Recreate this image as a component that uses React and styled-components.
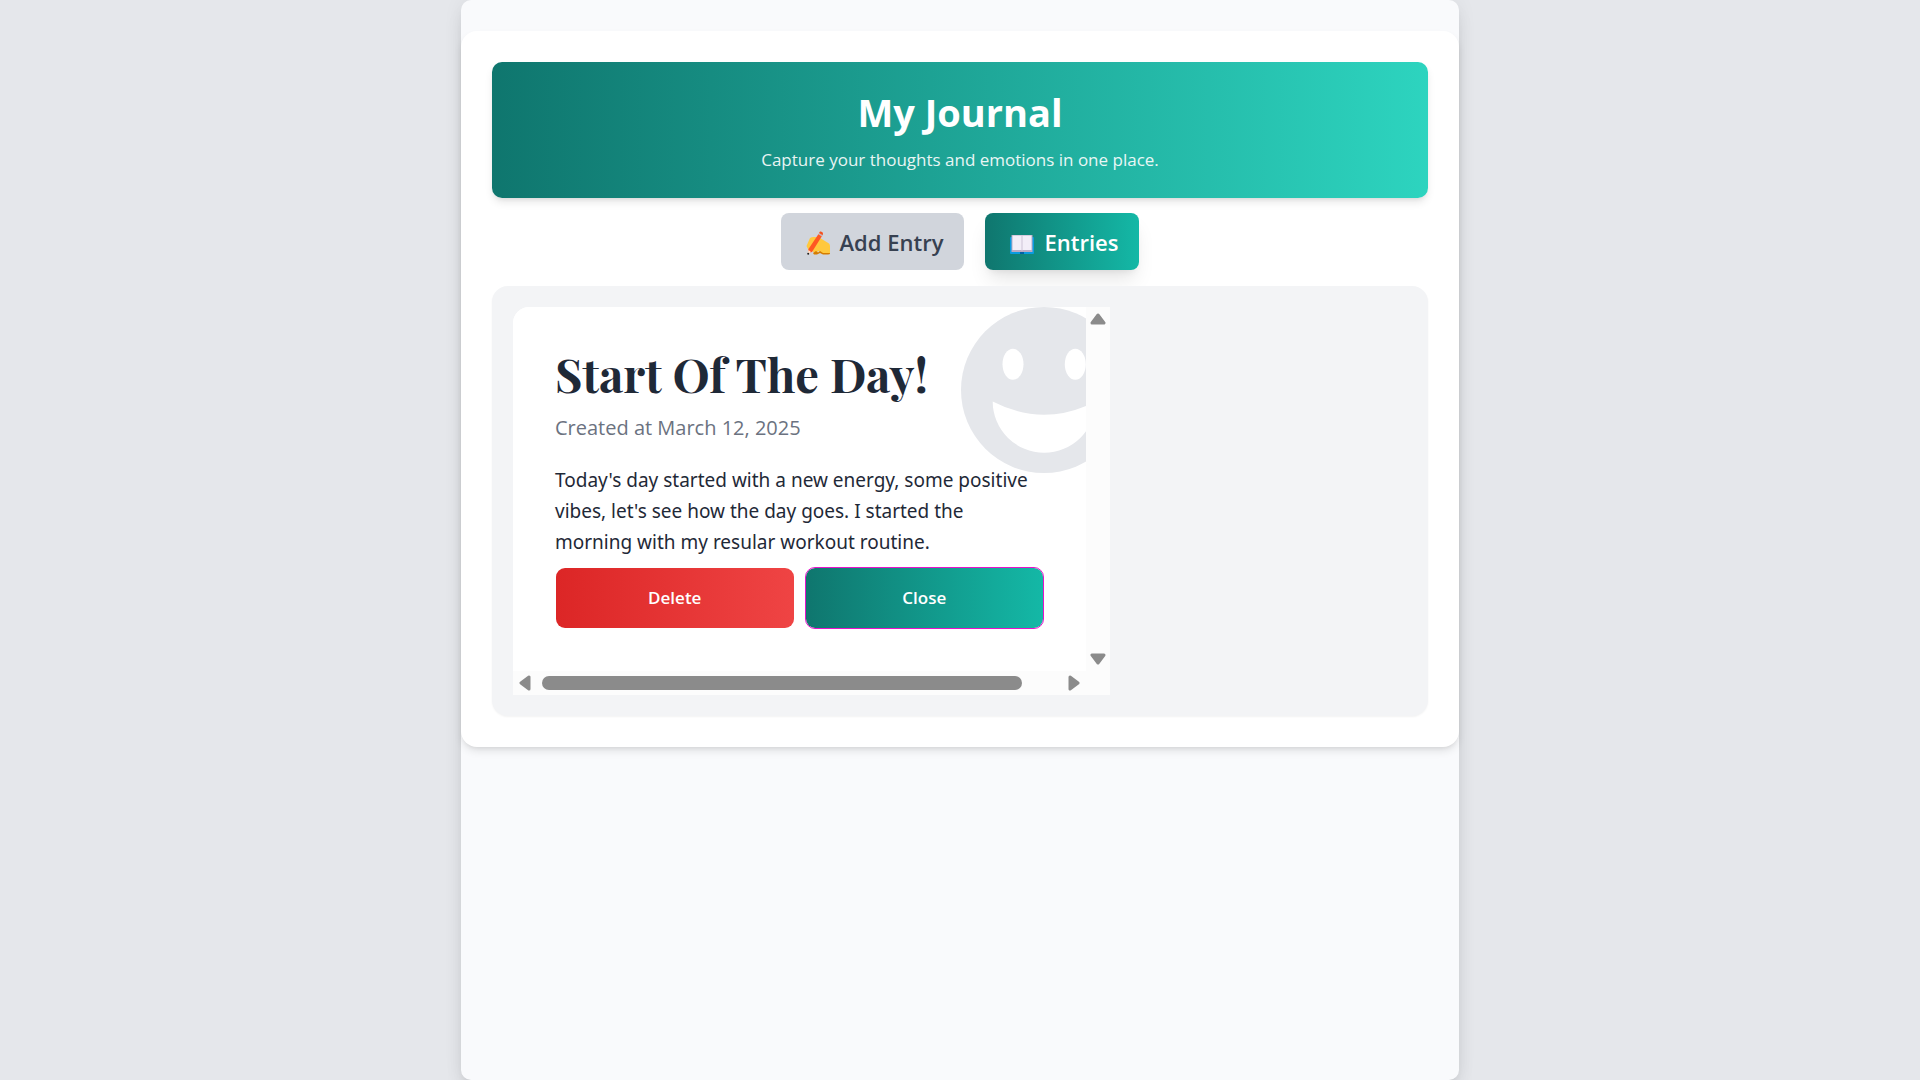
import React from "react";
import styled, { createGlobalStyle, css } from "styled-components";

const sans = `"Segoe UI", "Open Sans", "Noto Sans", sans-serif`;
const serif = `"Playfair Display", "Liberation Serif", serif`;

const GlobalStyle = createGlobalStyle`
  *, *::before, *::after { box-sizing: border-box; }
  body { margin: 0; background: #e5e7eb; font-family: ${sans}; color: #1f2937; }
  h1, h2, p { margin: 0; }
  button { font: inherit; border: 0; cursor: pointer; }
`;

const Shell = styled.div`
  max-width: 998px;
  min-height: 100vh;
  margin: 0 auto;
  padding: 31px 0;
  border-radius: 10px;
  background: #f9fafc;
  box-shadow: 0 13px 20px -4px rgba(0, 0, 0, 0.1), 0 5px 8px -5px rgba(0, 0, 0, 0.1),
    0 0 20px rgba(0, 0, 0, 0.06);
`;

const Page = styled.main`
  display: flex;
  flex-direction: column;
  padding: 31px;
  border-radius: 16px;
  background: #ffffff;
  box-shadow: 0 5px 8px -1px rgba(0, 0, 0, 0.1), 0 3px 5px -3px rgba(0, 0, 0, 0.1);
`;

const Banner = styled.header`
  padding: 27px 26px 25px;
  border-radius: 10px;
  background: linear-gradient(to right, #0f766e, #2dd4bf);
  box-shadow: 0 5px 8px -1px rgba(0, 0, 0, 0.1), 0 3px 5px -3px rgba(0, 0, 0, 0.1);
  color: #ffffff;
  text-align: center;
`;

const BannerTitle = styled.h1`
  font-size: 38px;
  line-height: 47px;
  font-weight: 700;
`;

const BannerText = styled.p`
  padding-top: 11px;
  font-size: 17px;
  line-height: 26px;
  opacity: 0.9;
`;

const Tabs = styled.nav`
  display: flex;
  justify-content: center;
  gap: 21px;
  padding: 15px 0 16px;
`;

const Tab = styled.button`
  display: flex;
  align-items: center;
  gap: 10px;
  padding: 14px 21px 12px 25px;
  border-radius: 8px;
  font-size: 22px;
  line-height: 31px;
  font-weight: 600;
  color: #374151;
  background: #d1d5dc;
  ${({ $active }) =>
    $active &&
    css`
      color: #ffffff;
      background: linear-gradient(to right, #0f766e, #14b8a6);
      box-shadow: 0 13px 20px -4px rgba(0, 0, 0, 0.1), 0 5px 8px -5px rgba(0, 0, 0, 0.1);
    `}
`;

const Entries = styled.section`
  padding: 21px;
  border-radius: 16px;
  background: #f3f4f6;
  box-shadow: 0 1px 2px rgba(0, 0, 0, 0.05);
`;

const EntryFrame = styled.div`
  display: grid;
  grid-template-columns: minmax(0, 1fr) 24px;
  grid-template-rows: auto 24px;
  max-width: 597px;
  border-radius: 16px 0 0 0;
  overflow: hidden;
  background: #fcfcfc;
`;

const Entry = styled.article`
  position: relative;
  overflow: hidden;
  padding: 42px;
  background: #ffffff;
`;

const Mood = styled.svg`
  position: absolute;
  top: 0;
  right: -41px;
  width: 166px;
  height: 166px;
`;

const EntryContent = styled.div`
  position: relative;
`;

const EntryTitle = styled.h2`
  font-family: ${serif};
  font-size: 47px;
  line-height: 49px;
  font-weight: 700;
`;

const EntryDate = styled.p`
  padding-top: 14px;
  font-size: 20px;
  line-height: 31px;
  color: #6b7280;
`;

const EntryText = styled.p`
  padding: 22px 0 9px;
  font-family: "Segoe UI", "Noto Sans", "Open Sans", sans-serif;
  font-size: 19px;
  line-height: 31px;
`;

const Actions = styled.div`
  display: grid;
  grid-template-columns: 1fr 1fr;
  gap: 10px;
`;

const Action = styled.button`
  padding: 17px;
  border: 1px solid ${({ $edge }) => $edge};
  border-radius: 10px;
  background: linear-gradient(to right, ${({ $from }) => $from}, ${({ $to }) => $to}) padding-box;
  color: #ffffff;
  font-size: 17px;
  line-height: 26px;
  font-weight: 600;
`;

const ScrollBar = styled.div`
  display: flex;
  flex-direction: ${({ $vertical }) => ($vertical ? "column" : "row")};
  align-items: center;
  justify-content: space-between;
  padding: ${({ $vertical }) => ($vertical ? "6px 0" : "0 6px")};
`;

const ScrollTrack = styled.div`
  flex: 1;
  padding: 0 46px 0 11px;
`;

const ScrollThumb = styled.div`
  height: 14px;
  border-radius: 7px;
  background: #8b8b8b;
`;

const ArrowIcon = styled.svg`
  display: block;
  flex: none;
`;

function Arrow({ direction }) {
  const upright = direction === "up" || direction === "down";
  const points = {
    up: "2,10 8,2 14,10",
    down: "2,2 14,2 8,10",
    left: "10,2 10,14 2,8",
    right: "2,2 10,8 2,14",
  };
  return (
    <ArrowIcon
      width={upright ? 16 : 12}
      height={upright ? 12 : 16}
      viewBox={upright ? "0 0 16 12" : "0 0 12 16"}
      fill="#8b8b8b"
      stroke="#8b8b8b"
      strokeWidth="3"
      strokeLinejoin="round"
      aria-hidden="true"
    >
      <polygon points={points[direction]} />
    </ArrowIcon>
  );
}

function WritingIcon() {
  return (
    <svg width="24" height="24" viewBox="0 0 24 24" aria-hidden="true">
      <path d="M0.500 15 L4 7 Q6 5.500 9 6 L14 7 L23 12.500 Q24 13.500 24 15 V22 H15 L13 20 L9 22 L6 20 L3 20 Z" fill="#ffc83d" />
      <path d="M7 22 L10 20 L12 21.500 L14 20 L17 22 H24 V22.500 Q24 23.500 22 23.500 H17 L14 22 L11 23.500 H8 Z" fill="#d67d00" />
      <path d="M12.500 3 L16 5 L6 21 L2 22 L2.500 18 Z" fill="#ff5722" />
      <path d="M12.300 3.300 L13 2 L16.700 4.300 L16 5.500 Z" fill="#c9b6bd" />
      <path d="M13 2 L14 0.500 Q16 0 17 2 L16.700 4.300 Z" fill="#f4511e" />
      <path d="M2.500 19 L5 21 L1.500 23.500 Z" fill="#ffe0c8" />
      <circle cx="2.200" cy="22.700" r="1" fill="#212121" />
    </svg>
  );
}

function BookIcon() {
  return (
    <svg width="24" height="24" viewBox="0 0 24 24" aria-hidden="true">
      <path d="M1 6 H23 Q24 6 24 7 V22 Q24 23 23 23 H1 Q0 23 0 22 V7 Q0 6 1 6 Z" fill="#0a9be0" />
      <path d="M10 21 H14 V23 H10 Z" fill="#0062a8" />
      <path d="M1.500 4 H22.500 V21 H1.500 Z" fill="#b9abc6" />
      <path d="M2.500 4.500 H21.500 V19 H2.500 Z" fill="#f3eef8" />
      <path d="M12 4.500 V20" stroke="#cdc4d6" />
    </svg>
  );
}

function MoodIcon() {
  return (
    <Mood viewBox="0 0 166 166" aria-hidden="true">
      <circle cx="83" cy="83" r="83" fill="#e5e7eb" />
      <g fill="#ffffff">
        <ellipse cx="52" cy="57.300" rx="10.500" ry="15.500" />
        <ellipse cx="114.300" cy="57.300" rx="10.500" ry="15.500" />
        <path d="M31.700 94.500 Q83 121 134.600 94.500 A51.400 51.200 0 0 1 31.700 94.500 Z" />
      </g>
    </Mood>
  );
}

export default function App() {
  return (
    <>
      <GlobalStyle />
      <Shell>
        <Page>
          <Banner>
            <BannerTitle>My Journal</BannerTitle>
            <BannerText>Capture your thoughts and emotions in one place.</BannerText>
          </Banner>
          <Tabs>
            <Tab type="button">
              <WritingIcon />
              Add Entry
            </Tab>
            <Tab type="button" $active>
              <BookIcon />
              Entries
            </Tab>
          </Tabs>
          <Entries>
            <EntryFrame>
              <Entry>
                <MoodIcon />
                <EntryContent>
                  <EntryTitle>Start Of The Day!</EntryTitle>
                  <EntryDate>Created at March 12, 2025</EntryDate>
                  <EntryText>
                    Today's day started with a new energy, some positive vibes, let's see how the
                    day goes. I started the morning with my resular workout routine.
                  </EntryText>
                  <Actions>
                    <Action type="button" $from="#dc2626" $to="#ef4444" $edge="transparent">
                      Delete
                    </Action>
                    <Action type="button" $from="#0f766e" $to="#14b8a6" $edge="#e613cb">
                      Close
                    </Action>
                  </Actions>
                </EntryContent>
              </Entry>
              <ScrollBar $vertical>
                <Arrow direction="up" />
                <Arrow direction="down" />
              </ScrollBar>
              <ScrollBar>
                <Arrow direction="left" />
                <ScrollTrack>
                  <ScrollThumb />
                </ScrollTrack>
                <Arrow direction="right" />
              </ScrollBar>
            </EntryFrame>
          </Entries>
        </Page>
      </Shell>
    </>
  );
}
